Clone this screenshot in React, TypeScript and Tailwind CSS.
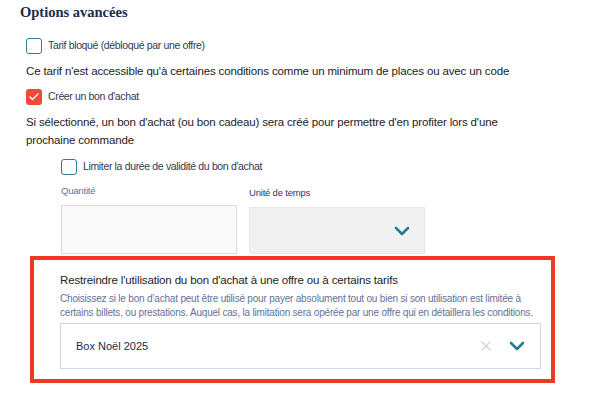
import { ChevronDown, X, Check } from "lucide-react";

const Box = ({ checked = false }: { checked?: boolean }) =>
  checked ? (
    <span className="flex h-4 w-4 shrink-0 items-center justify-center rounded-[3px] bg-[#f04a36]">
      <Check className="h-3 w-3 text-white" strokeWidth={2.5} />
    </span>
  ) : (
    <span className="h-4 w-4 shrink-0 rounded-[3px] border-[1.5px] border-[#2b7f90] bg-white" />
  );

const App = () => {
  return (
    <div
      className="h-[406px] w-[592px] overflow-hidden bg-white"
      style={{ fontFamily: '"Liberation Sans", Arial, sans-serif' }}
    >
      <div className="pl-[20px] pt-[2px]">
        <h2
          className="text-[14.5px] font-bold leading-[20px] text-[#1b2c4b]"
          style={{ fontFamily: '"Liberation Serif", "DejaVu Serif", serif' }}
        >
          Options avancées
        </h2>

        <div className="pl-[6px]">
          <label className="mt-[16px] flex items-center gap-[6px]">
            <Box />
            <span className="text-[10.5px] tracking-[-0.35px] text-[#2d3b55]">Tarif bloqué (débloqué par une offre)</span>
          </label>
          <p className="mt-[8px] text-[11.5px] leading-[18px] tracking-[-0.15px] text-[#222]">
            Ce tarif n'est accessible qu'à certaines conditions comme un minimum de places ou avec un code
          </p>

          <label className="mt-[9px] flex items-center gap-[6px]">
            <Box checked />
            <span className="text-[10.5px] tracking-[-0.35px] text-[#2d3b55]">Créer un bon d'achat</span>
          </label>
          <p className="mt-[8px] max-w-[492px] text-[11.5px] leading-[18px] tracking-[-0.15px] text-[#222]">
            Si sélectionné, un bon d'achat (ou bon cadeau) sera créé pour permettre d'en profiter lors d'une prochaine commande
          </p>

          <div className="pl-[35px]">
            <label className="mt-[10px] flex items-center gap-[6px]">
              <Box />
              <span className="text-[10.5px] tracking-[-0.35px] text-[#2d3b55]">Limiter la durée de validité du bon d'achat</span>
            </label>

            <div className="mt-[9px] flex gap-[12px]">
              <div className="w-[176px]">
                <div className="text-[9.5px] leading-[14px] tracking-[-0.2px] text-[#5f7193]">Quantité</div>
                <div className="mt-[7px] h-[49px] border border-[#dcdcdc] bg-[#fafafa]" />
              </div>
              <div className="w-[176px]">
                <div className="mt-[2px] text-[9.5px] leading-[14px] tracking-[-0.2px] text-[#2d3b55]">Unité de temps</div>
                <div className="mt-[7px] flex h-[47px] items-center justify-end border border-[#e6e6e6] bg-[#f1f1f1] pr-[10px]">
                  <ChevronDown size={24} className="text-[#1f7f93]" strokeWidth={2.6} />
                </div>
              </div>
            </div>
          </div>
        </div>

        <div className="mt-[2px] ml-[10px] w-[525px] border-4 border-[#ee3724] pt-[12px] pr-[10px] pb-[10px] pl-[26px]">
          <div className="text-[11.5px] leading-[16px] tracking-[-0.15px] text-[#222]">
            Restreindre l'utilisation du bon d'achat à une offre ou à certains tarifs
          </div>
          <p className="mt-[4px] text-[10px] leading-[14px] tracking-[-0.2px] text-[#5f7399]">
            Choisissez si le bon d’achat peut être utilisé pour payer absolument tout ou bien si son utilisation est limitée à certains billets, ou prestations. Auquel cas, la limitation sera opérée par une offre qui en détaillera les conditions.
          </p>
          <div className="mt-[3px] flex h-[46px] items-center border border-[#d3d6dd] bg-white pl-[15px] pr-[11px]">
            <span className="flex-1 text-[11px] text-[#1b2c4b]">Box Noël 2025</span>
            <X size={16} className="text-[#cfcfcf]" strokeWidth={1.6} />
            <ChevronDown size={24} className="ml-[11px] text-[#1f7f93]" strokeWidth={2.6} />
          </div>
        </div>
      </div>
    </div>
  );
};

export default App;
